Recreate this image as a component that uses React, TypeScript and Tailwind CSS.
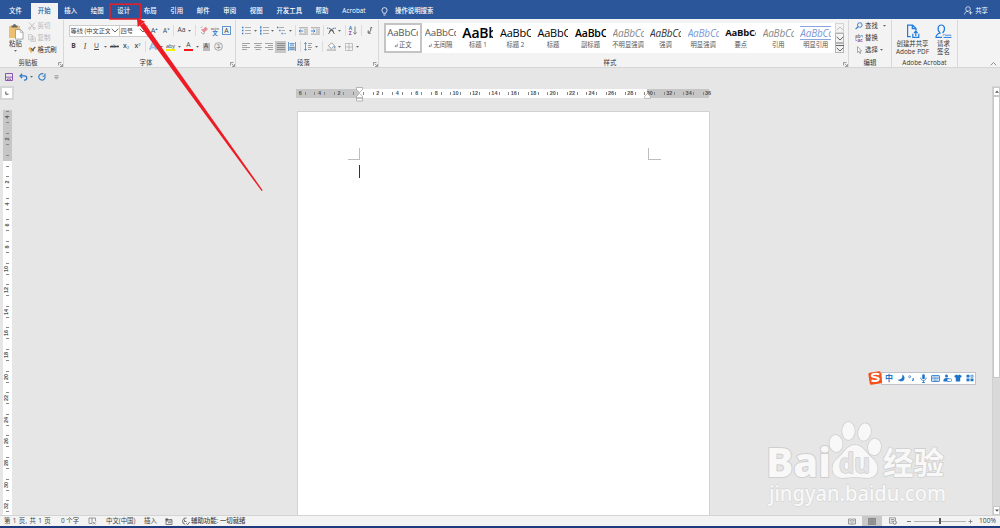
import type { ReactNode } from 'react'
import clsx from 'clsx'

const blue = '#2f78c4'
const gray = '#666'

const tabs = [
  { label: '文件', width: 'w-[31px]' },
  { label: '开始', width: 'w-[26.5px]', active: true },
  { label: '插入', width: 'w-[26.5px]' },
  { label: '绘图', width: 'w-[26.5px]' },
  { label: '设计', width: 'w-[26.5px]' },
  { label: '布局', width: 'w-[26.5px]' },
  { label: '引用', width: 'w-[26.5px]' },
  { label: '邮件', width: 'w-[26.5px]' },
  { label: '审阅', width: 'w-[26.5px]' },
  { label: '视图', width: 'w-[26.5px]' },
  { label: '开发工具', width: 'w-[39.5px]' },
  { label: '帮助', width: 'w-[26px]' },
  { label: 'Acrobat', width: 'w-[38px]' },
]

const styles = [
  { label: '正文', sample: 'AaBbCc', look: 'text-[9.7px] text-[#555]', mark: true, active: true },
  { label: '无间隔', sample: 'AaBbCc', look: 'text-[9.7px] text-[#555]', mark: true },
  { label: '标题 1', sample: 'AaBb', look: 'text-[14px] font-semibold text-black' },
  { label: '标题 2', sample: 'AaBbC', look: 'text-[11px] text-black' },
  { label: '标题', sample: 'AaBbC', look: 'text-[11px] text-black' },
  { label: '副标题', sample: 'AaBbC', look: 'text-[10.5px] font-semibold text-black' },
  { label: '不明显强调', sample: 'AaBbCc', look: 'text-[10px] italic text-[#888]' },
  { label: '强调', sample: 'AaBbCc', look: 'text-[10px] italic text-[#333]' },
  { label: '明显强调', sample: 'AaBbCc', look: 'text-[10px] italic text-[#7c99da]' },
  { label: '要点', sample: 'AaBbCc', look: 'text-[9.5px] font-bold text-[#111]' },
  { label: '引用', sample: 'AaBbCc', look: 'text-[10px] italic text-[#888]' },
  { label: '明显引用', sample: 'AaBbCc', look: 'text-[10px] italic text-[#7c99da] border-y border-[#8aa5dd]' },
]

const hNumbers = Array.from({ length: 22 }, (_, i) => (i - 3) * 2)
const vNumbers = Array.from({ length: 19 }, (_, i) => (i - 2) * 2)

function Icon({ w, h, children, className }: { w: number; h: number; children: ReactNode; className?: string }) {
  return (
    <svg width={w} height={h} viewBox={`0 0 ${w} ${h}`} fill="none" className={clsx('shrink-0', className)}>
      {children}
    </svg>
  )
}

function Cell({ className, children }: { className: string; children?: ReactNode }) {
  return <span className={clsx('flex h-full shrink-0 items-center justify-center whitespace-nowrap', className)}>{children}</span>
}

function Caret({ className }: { className: string }) {
  return (
    <Cell className={className}>
      <Icon w={3} h={2}>
        <path d="M0 0h3L1.5 1.8z" fill="#666" />
      </Icon>
    </Cell>
  )
}

function Sep({ className }: { className: string }) {
  return (
    <Cell className={className}>
      <span className="h-[11px] w-px bg-[#dcdcdc]" />
    </Cell>
  )
}

function Chevron({ up, color = '#555' }: { up?: boolean; color?: string }) {
  return (
    <Icon w={8} h={5}>
      <path d={up ? 'M.7 4.2 4 1l3.3 3.2' : 'M.7.8 4 4 7.3.8'} stroke={color} strokeWidth=".9" />
    </Icon>
  )
}

function Group({ label, width, launcher, children }: { label: string; width: string; launcher?: boolean; children: ReactNode }) {
  return (
    <section className={clsx('flex h-[48px] shrink-0 flex-col', width)}>
      <div className="flex min-h-0 flex-1 border-r border-[#d8d8d8]">{children}</div>
      <div className="flex h-[10px] items-center border-r border-[#d8d8d8]">
        <span className="flex-1 text-center text-[6.4px] leading-[10px] text-[#333]">{label}</span>
        {launcher && (
          <span className="flex w-[7px] justify-end pt-[2px] pr-[0.5px]">
            <Icon w={5} h={5}>
              <path d="M.5 3.5v-3h3M1.8 1.8l2.4 2.4M4.5 2v2.5H2" stroke="#777" strokeWidth=".7" />
            </Icon>
          </span>
        )}
      </div>
    </section>
  )
}

function AlignIcon({ widths, offset, color = '#999' }: { widths: number[]; offset: number; color?: string }) {
  return (
    <Icon w={8} h={7}>
      {widths.map((w, i) => (
        <path key={i} d={`M${(8 - w) * offset} ${i * 2 + 0.5}h${w}`} stroke={color} strokeWidth=".9" />
      ))}
    </Icon>
  )
}

function ListIcon({ dots }: { dots: string }) {
  return (
    <Icon w={9} h={9}>
      <path d={dots} stroke={blue} strokeWidth="1.3" />
      <path d="M3 1.5h6M3 4.5h6M3 7.5h6" stroke="#999" strokeWidth=".8" />
    </Icon>
  )
}

function IndentIcon({ flip }: { flip?: boolean }) {
  return (
    <Icon w={9} h={8}>
      <path d="M0 .8h9M5 2.9h4M5 5h4M0 7.1h9" stroke="#8a8a8a" strokeWidth=".8" />
      <path d={flip ? 'M0 4h4M2.5 2.5 4 4 2.5 5.5' : 'M4.2 4h-4M1.7 2.5.2 4l1.5 1.5'} stroke={blue} strokeWidth=".9" />
    </Icon>
  )
}

function TitleBar() {
  return (
    <header className="flex h-[19px] shrink-0 items-end bg-[#2b579a] text-[6.4px] text-white">
      {tabs.map((tab) => (
        <div
          key={tab.label}
          className={clsx(
            'flex h-[16px] shrink-0 items-center justify-center pb-[1px] font-medium',
            tab.width,
            tab.active && 'bg-[#f3f3f3] text-[#2b579a]',
          )}
        >
          {tab.label}
        </div>
      ))}
      <div className="flex h-[16px] w-[22px] items-center justify-center">
        <Icon w={7} h={9}>
          <path d="M2.3 6.3C2 5.2.9 4.7.9 3.2a2.6 2.6 0 0 1 5.2 0c0 1.5-1.1 2-1.4 3.1zM2.4 8h2.2" stroke="#fff" strokeWidth=".8" />
        </Icon>
      </div>
      <div className="flex h-[16px] flex-1 items-center pb-[1px] font-medium">操作说明搜索</div>
      <div className="flex h-[16px] items-center gap-[2px] pr-[12px] pb-[1px]">
        <Icon w={9} h={9}>
          <circle cx="4" cy="3" r="2.3" stroke="#fff" strokeWidth=".7" />
          <path d="M.6 8.5c0-2 1.4-3.2 3.4-3.2M6.6 5v3.6M4.8 6.8h3.6" stroke="#fff" strokeWidth=".7" />
        </Icon>
        共享
      </div>
    </header>
  )
}

function ClipboardGroup() {
  return (
    <Group label="剪贴板" width="w-[64px]" launcher>
      <div className="flex w-[28px] flex-col items-center pt-[3px] pl-[3px]">
        <Icon w={16} h={17}>
          <path d="M1 3h11v12H1z" fill="#ecc071" />
          <path d="M3.5 2.5H5a1.5 1.5 0 0 1 3 0h1.5v2h-6z" fill="#666" />
          <path d="M7.5 6.5h5L15 9.1v7H7.5z" fill="#fff" stroke="#888" strokeWidth=".7" />
          <path d="M12.3 6.5v2.8H15" stroke="#888" strokeWidth=".6" />
        </Icon>
        <span className="-mt-[1px] text-[6.4px] leading-[9px] text-[#333]">粘贴</span>
        <Caret className="h-[6px]!" />
      </div>
      <div className="flex flex-col text-[6.4px] text-[#b4b4b4]">
        <div className="flex h-[12px] items-center gap-[1.5px]">
          <Icon w={8} h={8}>
            <path d="M1.2.8l4.4 4.9M6.6.8 2.3 5.7" stroke="#b5b5b5" strokeWidth=".8" />
            <circle cx="1.7" cy="6.4" r="1.1" stroke="#b5b5b5" strokeWidth=".7" />
            <circle cx="6.2" cy="6.4" r="1.1" stroke="#b5b5b5" strokeWidth=".7" />
          </Icon>
          剪切
        </div>
        <div className="flex h-[12px] items-center gap-[1.5px]">
          <Icon w={8} h={8}>
            <path d="M.5.5h2.8l1.4 1.3v4H.5z M3 2.4h3l1.4 1.4v3.8H3z" fill="#eee" stroke="#b8b8b8" strokeWidth=".6" />
            <path d="M4 4.8h2.4M4 6h2.4" stroke="#b8b8b8" strokeWidth=".5" />
          </Icon>
          复制
        </div>
        <div className="flex h-[12px] items-center gap-[1.5px] text-[#333]">
          <Icon w={8} h={8}>
            <path d="M.3 2.2 2.4 1l3 3.3-2.3 2.9z" fill="#e8b15c" />
            <path d="m3.2 2.4 2.5 2.8M5 3.5 7.3.8" stroke="#555" strokeWidth="1.2" />
          </Icon>
          格式刷
        </div>
      </div>
    </Group>
  )
}

function FontGroup() {
  return (
    <Group label="字体" width="w-[172px]" launcher>
      <div className="flex flex-col gap-[4px] pt-[4.5px] text-[6.8px] text-[#444]">
        <div className="flex h-[12px] pl-[4.5px]">
          <div className="flex w-[51px] items-center justify-between border border-[#ccc] bg-white pl-[1px] text-[6.2px]">
            <span className="w-[39px] overflow-hidden whitespace-nowrap">等线 (中文正文</span>
            <Chevron />
          </div>
          <div className="flex w-[28.5px] items-center justify-between border border-l-0 border-[#ccc] bg-white pl-[1px] text-[6.2px]">
            四号
            <Chevron />
          </div>
          <Cell className="w-[13px] text-[7.4px]">
            A
            <Icon w={3} h={6}>
              <path d="M.2 2h2.6L1.5.3z" fill={blue} />
            </Icon>
          </Cell>
          <Cell className="w-[11px] text-[6.4px]">
            A
            <Icon w={3} h={6}>
              <path d="M.2.5h2.6L1.5 2.2z" fill={blue} />
            </Icon>
          </Cell>
          <Sep className="w-[3px]" />
          <Cell className="w-[13px]">Aa</Cell>
          <Caret className="w-[3px]" />
          <Sep className="w-[9px]" />
          <Cell className="w-[8px]">
            <Icon w={9} h={9}>
              <path d="m1 3.3 3 3.4 4-3.6L5.5.8 3.4 3z" fill="#e78a98" />
              <path d="m1.2 6.2 1.8 2 2-1.6M.8 2l1.6-1.6" stroke="#888" strokeWidth=".7" />
            </Icon>
          </Cell>
          <Cell className="w-[14px] flex-col">
            <span className="text-[4.3px] leading-[4px]">wén</span>
            <span className="text-[5.5px] leading-[6px] font-bold text-[#2f78c4]">文</span>
          </Cell>
          <Cell className="w-[9px]">
            <span className="flex h-[9px] w-[9px] shrink-0 items-center justify-center border border-[#5f97cf] text-[7px] leading-none">A</span>
          </Cell>
        </div>
        <div className="flex h-[12px] pl-[4px]">
          <Cell className="w-[11px] font-bold">B</Cell>
          <Cell className="w-[12px] font-['Liberation_Serif'] text-[7.5px] italic">I</Cell>
          <Cell className="w-[11px] underline">U</Cell>
          <Caret className="w-[7px]" />
          <Cell className="w-[11px] text-[5.4px] line-through">abc</Cell>
          <Cell className="w-[12px] font-semibold">
            x<sub className="text-[4px] text-[#2f78c4]">2</sub>
          </Cell>
          <Cell className="w-[11px] font-semibold">
            x<sup className="text-[4px] text-[#2f78c4]">2</sup>
          </Cell>
          <Sep className="w-[5px]" />
          <Cell className="w-[10px]">
            <Icon w={8} h={9}>
              <path d="M.8 7.8 3.6 1h.9l2.8 6.8M2 5.4h4" stroke="#5d9bd6" strokeWidth="1.5" />
              <path d="M.8 7.8 3.6 1h.9l2.8 6.8M2 5.4h4" stroke="#f3f3f3" strokeWidth=".5" />
            </Icon>
          </Cell>
          <Caret className="w-[6px]" />
          <Cell className="w-[13px] flex-col">
            <span className="text-[5.5px] leading-[6px]">aby</span>
            <span className="h-[2px] w-[9px] bg-[#f7f000]" />
          </Cell>
          <Caret className="w-[5px]" />
          <Cell className="w-[13px] flex-col">
            <span className="text-[6.8px] leading-[6.5px]">A</span>
            <span className="h-[2px] w-[9px] bg-[#f01818]" />
          </Cell>
          <Caret className="w-[4px]" />
          <Cell className="w-[14px]">
            <span className="flex h-[8px] w-[7px] items-center justify-center bg-[#bbb] text-[6.5px] leading-none">A</span>
          </Cell>
          <Cell className="w-[10px]">
            <Icon w={9} h={9}>
              <circle cx="4.5" cy="4.5" r="3.9" stroke="#777" strokeWidth=".6" />
              <text x="4.5" y="6.3" textAnchor="middle" fontSize="5" fill="#666">字</text>
            </Icon>
          </Cell>
        </div>
      </div>
    </Group>
  )
}

function ParagraphGroup() {
  return (
    <Group label="段落" width="w-[143px]" launcher>
      <div className="flex flex-col gap-[4px] pt-[4.5px] pl-[4px]">
        <div className="flex h-[12px]">
          <Cell className="w-[12px]">
            <ListIcon dots="M0 1.5h1.4M0 4.5h1.4M0 7.5h1.4" />
          </Cell>
          <Caret className="w-[6px]" />
          <Cell className="w-[12px]">
            <ListIcon dots="M.8.3v2.2M.8 3.5v2.2M.8 6.6v2.2" />
          </Cell>
          <Caret className="w-[4px]" />
          <Cell className="w-[14px]">
            <Icon w={9} h={9}>
              <path d="M0 1.5h1.4M2.2 4.5h1.3M4.5 7.5h1.2" stroke={blue} strokeWidth="1.3" />
              <path d="M2.3 1.5H7M4.5 4.5H8M6.6 7.5H9" stroke="#999" strokeWidth=".8" />
            </Icon>
          </Cell>
          <Caret className="w-[4px]" />
          <Sep className="w-[6px]" />
          <Cell className="w-[11px]">
            <IndentIcon />
          </Cell>
          <Cell className="w-[12px]">
            <IndentIcon flip />
          </Cell>
          <Sep className="w-[5px]" />
          <Cell className="w-[11px]">
            <Icon w={9} h={8}>
              <path d="m1.5 7 3-4.5 3 4.5M2 1l5 3.5M7 1 2 4.5" stroke="#555" strokeWidth=".9" />
              <path d="M0 1.2h1.4M7.6 1.2H9" stroke={blue} />
            </Icon>
          </Cell>
          <Caret className="w-[4px]" />
          <Sep className="w-[8px]" />
          <Cell className="w-[8px] gap-[1px]">
            <span className="flex flex-col text-[4.8px] leading-[4.5px] font-bold">
              <span className="text-[#2f78c4]">A</span>
              <span className="text-[#8e4ba8]">Z</span>
            </span>
            <Icon w={4} h={9}>
              <path d="M2 .5v7.6M.4 6.4 2 8.2l1.6-1.8" stroke={gray} strokeWidth=".8" />
            </Icon>
          </Cell>
          <Sep className="w-[9px]" />
          <Cell className="w-[7px]">
            <Icon w={6} h={7}>
              <path d="M5.2.6H3.8v2.6M3.8 3.2 2 5.8M1.2 3.4v2.8h2.6" stroke="#555" strokeWidth=".9" />
            </Icon>
          </Cell>
        </div>
        <div className="flex h-[12px]">
          <Cell className="w-[12px]">
            <AlignIcon widths={[8, 5, 8, 5]} offset={0} />
          </Cell>
          <Cell className="w-[11px]">
            <AlignIcon widths={[8, 5, 8, 5]} offset={0.5} />
          </Cell>
          <Cell className="w-[12px]">
            <AlignIcon widths={[8, 5, 8, 5]} offset={1} />
          </Cell>
          <Cell className="w-[11px] bg-[#c6c6c6]">
            <AlignIcon widths={[8, 8, 8, 8]} offset={0} color="#888" />
          </Cell>
          <Cell className="w-[12px]">
            <Icon w={8} h={9}>
              <path d="M.4 0v9M7.6 0v9" stroke={blue} strokeWidth=".8" />
              <path d="M1.5 1.6h5M2 3.2h4" stroke={blue} strokeWidth=".8" />
              <path d="M1.2 4.6h5.6v3.8H1.2z" fill="#9cc3e6" />
              <path d="M1.5 5.5h5M1.5 7.3h5" stroke="#777" strokeWidth=".7" />
            </Icon>
          </Cell>
          <Sep className="w-[4px]" />
          <Cell className="w-[12px]">
            <Icon w={8} h={9}>
              <path d="M1.5.6v7.8M.2 2 1.5.6 2.8 2M.2 7l1.3 1.4L2.8 7" stroke={blue} strokeWidth=".7" />
              <path d="M4 1.5h4M4 3.5h3M4 5.5h4M4 7.5h3" stroke="#8a8a8a" strokeWidth=".8" />
            </Icon>
          </Cell>
          <Caret className="w-[4px]" />
          <Sep className="w-[9px]" />
          <Cell className="w-[9px]">
            <Icon w={9} h={9}>
              <path d="M1.4 4 4.6.8l2.8 2.8L4.3 6.4z" fill="#fff" stroke="#777" strokeWidth=".7" />
              <path d="M7.8 4.3v2" stroke={blue} />
              <path d="M.4 7.3h8.2v1.3H.4z" fill="#fff" stroke="#888" strokeWidth=".5" />
            </Icon>
          </Cell>
          <Caret className="w-[6px]" />
          <Cell className="w-[13px]">
            <Icon w={8} h={8}>
              <path d="M.5.5h7v7h-7zM4 .5v7M.5 4h7" stroke="#aaa" strokeWidth=".7" />
            </Icon>
          </Cell>
          <Caret className="w-[4px]" />
        </div>
      </div>
    </Group>
  )
}

function StylesGroup() {
  return (
    <Group label="样式" width="w-[470px]" launcher>
      <div className="flex h-[31px] pt-[3px] pl-[5px]">
        <div className="flex h-[30px] w-[451px] bg-white">
          {styles.map((style) => (
            <div
              key={style.label}
              className={clsx(
                'flex h-[30px] w-[37.55px] shrink-0 flex-col items-center border-2',
                style.active ? 'border-[#c4c4c4]' : 'border-transparent',
              )}
            >
              <div className="flex h-[15px] w-[31px] items-center overflow-hidden">
                <span className={clsx("w-[31px] overflow-hidden font-['Open_Sans'] leading-[12px] tracking-[-0.2px] whitespace-nowrap", style.look)}>
                  {style.sample}
                </span>
              </div>
              <span className="flex h-[10px] items-center text-[6.3px] leading-[10px] whitespace-nowrap text-[#555]">
                {style.mark && (
                  <Icon w={5} h={5}>
                    <path d="M3.3.8v2.4H1M2 2.2 1 3.2l1 1" stroke="#555" strokeWidth=".6" />
                  </Icon>
                )}
                {style.label}
              </span>
            </div>
          ))}
        </div>
        <div className="flex h-[31px] w-[9px] flex-col">
          <div className="flex h-[10px] items-center justify-center border border-[#d5d5d5]">
            <Chevron up color="#b5b5b5" />
          </div>
          <div className="flex h-[10px] items-center justify-center border border-[#b5b5b5]">
            <Chevron />
          </div>
          <div className="flex h-[10px] flex-col items-center justify-center gap-[1px] border border-[#b5b5b5]">
            <span className="h-px w-[8px] shrink-0 bg-[#666]" />
            <Chevron />
          </div>
        </div>
      </div>
    </Group>
  )
}

function EditGroup() {
  return (
    <Group label="编辑" width="w-[43px]">
      <div className="flex flex-col pl-[6px] text-[6.4px] text-[#333]">
        <div className="flex h-[12px] items-center gap-[2px]">
          <Icon w={8} h={8}>
            <circle cx="4.8" cy="3" r="2.3" stroke={blue} strokeWidth=".9" />
            <path d="M3.1 4.7.6 7.2" stroke={blue} strokeWidth="1.2" />
          </Icon>
          查找
          <Caret className="w-[9px]" />
        </div>
        <div className="flex h-[12px] items-center gap-[2px]">
          <Icon w={8} h={8}>
            <text x="0" y="3.8" fontSize="4.6" fontWeight="700" fill="#777">ab</text>
            <text x="2.6" y="7.6" fontSize="4.6" fontWeight="700" fill="#8e4ba8">ac</text>
            <path d="M.8 4.5v2h1.5M5.8 1.5h1.5v2" stroke={blue} strokeWidth=".6" />
          </Icon>
          替换
        </div>
        <div className="flex h-[12px] items-center gap-[2px]">
          <Icon w={8} h={8}>
            <path d="M2.5.6v6l1.4-1.3 1 2.3.9-.4-1-2.2h1.8z" fill="#fff" stroke="#777" strokeWidth=".6" />
          </Icon>
          选择
          <Caret className="w-[3px]" />
        </div>
      </div>
    </Group>
  )
}

function AcrobatGroup() {
  return (
    <Group label="Adobe Acrobat" width="w-[66px]">
      <div className="flex flex-1 justify-center gap-[4px] pt-[3.5px] text-center text-[6.4px] leading-[8px] text-[#333]">
        <div className="flex w-[34px] flex-col items-center gap-[1px] whitespace-nowrap">
          <Icon w={14} h={15}>
            <path
              d="M4.8 12.6H1.6V1.2h5l3.4 3.3v2M6.3 1.2v3.5H10M6.8 9.8v3.6h6V9.8M9.8 12V7.4M8 9l1.8-1.8L11.6 9"
              stroke="#1e7be0"
              strokeWidth="1.2"
            />
          </Icon>
          <span>
            创建并共享
            <br />
            <span className="tracking-[0.05px]">Adobe PDF</span>
          </span>
        </div>
        <div className="flex w-[20px] flex-col items-center gap-[1px] whitespace-nowrap">
          <Icon w={17} h={15}>
            <path
              d="M7 13.4H1c0-2.6 1.6-3.6 4-4.4C3.3 7.3 2.8 5.3 3.2 3.5 3.6 1.9 4.8 1 6.3 1s2.700.9 3.1 2.5c.4 1.8-.1 3.8-1.8 5.5"
              stroke="#1e7be0"
              strokeWidth="1.2"
            />
            <path d="M8 11.5 9.5 10M8.500 13.4h8M10 11.5c1-1.5 1.5.8 2.5-.3s1 .8 1.8.1 1 .3 2 .1" stroke="#1e7be0" strokeWidth="1" />
          </Icon>
          <span>
            请求
            <br />
            签名
          </span>
        </div>
      </div>
    </Group>
  )
}

function Ribbon() {
  return (
    <div className="flex h-[49px] shrink-0 border-b border-[#d6d6d6] bg-[#f3f3f3] pt-px">
      <ClipboardGroup />
      <FontGroup />
      <ParagraphGroup />
      <StylesGroup />
      <EditGroup />
      <AcrobatGroup />
      <div className="flex flex-1 items-end justify-end pr-[3px] pb-[1px]">
        <Icon w={7} h={5}>
          <path d="M.8 4.2 3.5 1.5l2.700 2.7" stroke="#777" strokeWidth=".8" />
        </Icon>
      </div>
    </div>
  )
}

function QuickAccess() {
  return (
    <div className="flex h-[18px] shrink-0 items-center pl-[3px]">
      <Cell className="w-[11px]">
        <Icon w={8} h={8}>
          <path d="M.5.5h7v7h-7z" stroke="#8a55b0" />
          <path d="M1 4.2h6M2.5 7.5V6h3v1.5" stroke="#8a55b0" strokeWidth=".9" />
        </Icon>
      </Cell>
      <Cell className="w-[19px]">
        <Icon w={9} h={8}>
          <path d="M3.2.8 1 2.9l2.2 2.2M1 2.9h4.6a2.1 2.1 0 0 1 0 4.3H5" stroke={blue} strokeWidth="1.2" />
        </Icon>
      </Cell>
      <Caret className="-ml-[4px] w-[4px]" />
      <Cell className="w-[17px]">
        <Icon w={8} h={8}>
          <path d="M5.4 1A3.2 3.2 0 1 0 7.2 4M4.6 3.2H7V.5" stroke={blue} strokeWidth="1.1" />
        </Icon>
      </Cell>
      <Cell className="w-[13px]">
        <Icon w={5} h={5}>
          <path d="M.5.7h4M.8 2.3h3.4L2.5 4.2z" stroke="#777" strokeWidth=".6" />
        </Icon>
      </Cell>
    </div>
  )
}

function HorizontalRuler() {
  return (
    <div className="relative mt-[2.5px] ml-[296px] h-[9px] w-[416px]">
      <div className="flex h-full">
        <div className="w-[63px] bg-[#c6c6c6]" />
        <div className="w-[288px] bg-white" />
        <div className="w-[62px] bg-[#c6c6c6]" />
      </div>
      <div className="absolute inset-0 flex overflow-hidden">
        <div className="-ml-[5.5px] flex items-center">
          {hNumbers.map((n) => (
            <div key={n} className="flex w-[19.43px] shrink-0 items-center justify-center">
              <span className="h-[3px] w-px shrink-0 bg-[#888]" />
              <span className="w-[8.8px] text-center font-['Liberation_Sans'] text-[5.5px] leading-[9px] font-bold text-[#555]">
                {n === 0 ? '' : Math.abs(n)}
              </span>
              <span className="h-[3px] w-px shrink-0 bg-[#888]" />
            </div>
          ))}
        </div>
      </div>
      <Icon w={7} h={15} className="absolute -top-[2px] left-[59.5px]">
        <path d="M.5.5h6v2.2L3.5 5.5.5 2.700zM3.5 6.5l3 2.8V11h-6V9.300zM.5 11h6v3h-6z" fill="#fff" stroke="#999" strokeWidth=".7" />
      </Icon>
      <Icon w={7} h={6} className="absolute top-[4px] left-[347.5px]">
        <path d="m3.5.6 2.8 2.6v2.2H.7V3.2z" fill="#fff" stroke="#999" strokeWidth=".6" />
      </Icon>
    </div>
  )
}

function VerticalRuler() {
  return (
    <div className="relative mt-[10px] ml-[3px] flex min-h-0 w-[8.5px] flex-1 flex-col overflow-hidden">
      <div className="h-[51px] shrink-0 bg-[#c6c6c6]" />
      <div className="flex-1 bg-white" />
      <div className="absolute inset-x-0 -top-[3.5px] flex flex-col">
        {vNumbers.map((n) => (
          <div key={n} className="flex h-[21.62px] shrink-0 flex-col items-center justify-center">
            <span className="h-px w-[3px] shrink-0 bg-[#888]" />
            <span className="flex h-[10px] shrink-0 -rotate-90 items-center font-['Liberation_Sans'] text-[5.5px] leading-none font-bold text-[#555]">
              {n === 0 ? '' : Math.abs(n)}
            </span>
            <span className="h-px w-[3px] shrink-0 bg-[#888]" />
          </div>
        ))}
      </div>
    </div>
  )
}

function DocumentPage() {
  return (
    <div className="mt-[10.5px] ml-[284px] flex w-[413px] flex-1 justify-between border border-b-0 border-[#d2d2d2] bg-white pt-[36.5px] pr-[48px] pl-[49px]">
      <div className="flex w-[13px] flex-col items-end">
        <div className="h-[12px] w-[12px] border-r border-b border-[#bdbdbd]" />
        <div className="mt-[5px] h-[13px] w-px bg-[#333]" />
      </div>
      <div className="h-[12px] w-[13px] border-b border-l border-[#bdbdbd]" />
    </div>
  )
}

function Scrollbar() {
  return (
    <div className="flex w-[8px] flex-col border-l border-[#d0d0d0] bg-[#d9d9d9] pt-px">
      <div className="flex h-[9px] items-center justify-center border border-[#c8c8c8] bg-white">
        <Icon w={4} h={3}>
          <path d="M0 2.7h4L2 .4z" fill="#555" />
        </Icon>
      </div>
      <div className="h-[282px] border border-[#c8c8c8] bg-white" />
      <div className="flex-1" />
      <div className="flex h-[9px] items-center justify-center border border-[#c8c8c8] bg-white">
        <Icon w={4} h={3}>
          <path d="M0 .4h4L2 2.7z" fill="#555" />
        </Icon>
      </div>
    </div>
  )
}

function Workspace() {
  return (
    <main className="flex min-h-0 flex-1">
      <div className="flex flex-1 flex-col">
        <div className="flex h-[14px] shrink-0">
          <div className="flex h-[14px] w-[14px] shrink-0 items-center justify-center border-2 border-[#d6d6d6] bg-white">
            <Icon w={4} h={4}>
              <path d="M.8.5v2.7h2.7" stroke="#555" />
            </Icon>
          </div>
          <div className="-ml-[14px]">
            <HorizontalRuler />
          </div>
        </div>
        <div className="flex min-h-0 flex-1">
          <div className="flex w-[13px] flex-col">
            <VerticalRuler />
          </div>
          <div className="flex flex-1 flex-col">
            <DocumentPage />
          </div>
        </div>
      </div>
      <Scrollbar />
    </main>
  )
}

function StatusBar() {
  return (
    <footer className="flex h-[13px] shrink-0 items-center border-t border-b-2 border-t-[#d4d4d4] border-b-[#1c3a7c] bg-[#f3f3f3] pl-[4px] text-[6.4px] whitespace-nowrap text-[#444]">
      <span className="w-[57px] tracking-[0.35px]">第 1 页, 共 1 页</span>
      <span className="w-[27px]">0 个字</span>
      <Icon w={9} h={8}>
        <path d="M1 1h3v5.5H1zM4 1h3.5v3M5 7.5l3-3M5 5l2.5 2.5" stroke="#777" strokeWidth=".7" />
      </Icon>
      <span className="ml-[9px] w-[38px]">中文(中国)</span>
      <span className="w-[21px]">插入</span>
      <Icon w={8} h={7}>
        <path d="M1 1.5h6v5H1zM1 3h6M3 4.7h3" stroke="#666" strokeWidth=".8" />
        <circle cx="1.7" cy="1.5" r="1.2" fill="#555" />
      </Icon>
      <Icon w={9} h={9} className="ml-[8px]">
        <path d="M5.5 1A3.2 3.2 0 1 0 4.200 7.4M3.5 2.500v2h2M5.300 6.2l1.300 1.500L8.600 5" stroke="#555" strokeWidth=".8" />
      </Icon>
      <span className="flex-1 pl-px font-medium">辅助功能: 一切就绪</span>
      <Cell className="w-[21px]">
        <Icon w={8} h={7}>
          <path d="M.5 1h3l.5.5.5-.5h3v5h-3l-.5.5-.5-.5h-3zM4 1.5v5M1.5 2.5h1.3M1.500 4h1.3M5.200 2.500h1.3M5.200 4h1.3" stroke="#777" strokeWidth=".7" />
        </Icon>
      </Cell>
      <Cell className="w-[20px] bg-[#c8c8c8]">
        <Icon w={8} h={7}>
          <path d="M.5.5h7v6h-7z" fill="#999" stroke="#888" />
          <path d="M2 2h4M2 3.5h4M2 5h4" stroke="#808080" strokeWidth=".6" />
        </Icon>
      </Cell>
      <Cell className="w-[22px]">
        <Icon w={8} h={8}>
          <path d="M.5.8h6v2.500M.5.8V6.200h3M1.700 2.500h3.600M1.700 4.200H4" stroke="#777" strokeWidth=".7" />
          <circle cx="5.7" cy="5.5" r="1.7" stroke="#666" strokeWidth=".8" />
        </Icon>
      </Cell>
      <Cell className="w-[10px]">
        <span className="h-px w-[4px] bg-[#777]" />
      </Cell>
      <div className="flex w-[52px] items-center justify-center">
        <span className="h-px flex-1 bg-[#b0b0b0]" />
        <span className="h-[6px] w-[2.5px] bg-[#555]" />
        <span className="h-px flex-1 bg-[#b0b0b0]" />
      </div>
      <Cell className="w-[8px]">
        <Icon w={5} h={5}>
          <path d="M.5 2.5h4M2.500.5v4" stroke="#777" strokeWidth=".8" />
        </Icon>
      </Cell>
      <span className="w-[26px] pl-[5px] text-[6.7px]">100%</span>
    </footer>
  )
}

function ImeBar() {
  return (
    <div className="absolute top-[370px] left-[867px] flex h-[16px] items-center">
      <Icon w={17} h={16} className="relative z-10">
        <rect x="2" y="2" width="12.5" height="12" rx="1.5" fill="#f4511e" transform="rotate(-9 8 8)" />
        <path d="M12.3 4.4C9.5 3.5 5 3.7 4.8 5.7c-.2 2 7 1.2 6.9 3.3-.1 2.2-4.7 2.4-7.2 1.5" stroke="#fff" strokeWidth="2" />
      </Icon>
      <div className="-ml-[3px] flex h-[13px] w-[95px] items-center border border-[#c0c4c8] bg-white pl-px text-[#1f74c8]">
        <Cell className="w-[12px] text-[8px] leading-none font-bold">中</Cell>
        <Cell className="w-[11px]">
          <Icon w={8} h={8}>
            <path d="M5.2.5c1 3-1 5-4.5 5.3C3.5 8.5 7.6 7.3 7.5 3.8 7.4 2.3 6.500 1.200 5.200.5z" fill="#1f74c8" />
          </Icon>
        </Cell>
        <Cell className="w-[11px]">
          <Icon w={7} h={7}>
            <circle cx="1.7" cy="1.7" r="1" stroke="#1f74c8" strokeWidth=".7" />
            <path d="M5.2 3.2v1.5L4.5 6" stroke="#1f74c8" strokeWidth="1.3" />
          </Icon>
        </Cell>
        <Cell className="w-[12px]">
          <Icon w={7} h={9}>
            <rect x="2.2" y=".3" width="2.6" height="5" rx="1.3" fill="#1f74c8" />
            <path d="M.8 3.5c0 4 5.4 4 5.4 0M3.5 6.5v2M2 8.5h3" stroke="#1f74c8" strokeWidth=".8" />
          </Icon>
        </Cell>
        <Cell className="w-[12px]">
          <Icon w={9} h={7}>
            <rect x=".5" y=".5" width="8" height="6" rx=".6" fill="#cfe2f5" stroke="#1f74c8" strokeWidth=".8" />
            <path d="M1.5 2.2h6M1.5 3.6h6M2.8 5.2h3.4" stroke="#1f74c8" strokeWidth=".7" strokeDasharray="1 .4" />
          </Icon>
        </Cell>
        <Cell className="w-[12px]">
          <Icon w={9} h={8}>
            <circle cx="3.5" cy="1.9" r="1.5" fill="#1f74c8" />
            <path d="M.3 7.5C.3 5 1.500 4 3.500 4c1.500 0 2.300.5 2.800 1.300L5 7.500z" fill="#1f74c8" />
            <rect x="4" y="4.8" width="4.7" height="2.7" rx="1" fill="#fff" stroke="#1f74c8" strokeWidth=".7" />
          </Icon>
        </Cell>
        <Cell className="w-[10px]">
          <Icon w={8} h={8}>
            <path d="M2.5.5Q4 1.800 5.500.5L7.800 2l-.9 1.700-.7-.4v4.200H1.800V3.300l-.7.4L.2 2z" fill="#1f74c8" />
          </Icon>
        </Cell>
        <Cell className="w-[13px]">
          <Icon w={8} h={8}>
            <path d="M.5.8h3v2.800h-3zM.5 4.500h3v2.800h-3zM4.500 4.500h3v2.800h-3z" fill="#1f74c8" />
            <path d="M4.900 1.200h2.200v2H4.900z" stroke="#1f74c8" strokeWidth=".7" />
          </Icon>
        </Cell>
      </div>
    </div>
  )
}

function Watermark() {
  return (
    <svg
      className="pointer-events-none absolute top-[415px] left-[762px]"
      width="192"
      height="96"
      viewBox="0 0 192 96"
      fill="#f8f8f8"
      stroke="#cfcfcf"
      strokeWidth="1.6"
      strokeLinejoin="round"
      paintOrder="stroke"
    >
      <text x="4" y="62" fontFamily="Noto Sans" fontSize="41" fontWeight="800" textLength="65" lengthAdjust="spacingAndGlyphs" strokeWidth="2">
        Bai
      </text>
      <ellipse cx="74" cy="28.5" rx="6.5" ry="8.5" transform="rotate(-8 74 28.5)" />
      <ellipse cx="86.5" cy="16" rx="6.3" ry="9" />
      <ellipse cx="102.5" cy="17" rx="6.3" ry="8.8" transform="rotate(12 102.5 17)" />
      <ellipse cx="112.5" cy="32" rx="6.5" ry="8.3" transform="rotate(8 112.5 32)" />
      <path d="M93 30c6 0 9 4.5 12.5 8.5 4 4.500 10 8 10 15 0 6-4.500 9.500-10 9.500-4.500 0-8-1-12.500-1s-8 1-12.500 1c-5.500 0-10-3.500-10-9.500 0-7 6-10.500 10-15C84 34.500 87 30 93 30z" />
      <text
        x="77"
        y="58"
        fontFamily="Noto Sans"
        fontSize="26"
        fontWeight="700"
        fill="#e4e4e4"
        strokeWidth="1.4"
        textLength="31"
        lengthAdjust="spacingAndGlyphs"
      >
        du
      </text>
      <text x="121" y="59" fontFamily="Noto Sans CJK SC" fontSize="31" fontWeight="700" textLength="61" lengthAdjust="spacingAndGlyphs">
        经验
      </text>
      <text
        x="7"
        y="86"
        fontFamily="Noto Sans"
        fontSize="21.5"
        fontWeight="500"
        stroke="#d6d6d6"
        strokeWidth="1.3"
        textLength="177"
        lengthAdjust="spacingAndGlyphs"
      >
        jingyan.baidu.com
      </text>
    </svg>
  )
}

function Annotation() {
  return (
    <svg className="pointer-events-none absolute top-0 left-[100px]" width="170" height="200" viewBox="0 0 170 200">
      <rect x="10" y="4.2" width="30.6" height="14.8" fill="none" stroke="#ed1c24" strokeWidth="1.5" />
      <path d="M39.800 25.500 44 22.500 162.700 190.300 161.600 191z" fill="#ed1c24" />
      <path d="M37 18.500 45 21.500 37.700 27z" fill="#ed1c24" />
    </svg>
  )
}

export default function App() {
  return (
    <div className="relative flex h-[528px] w-[1000px] flex-col overflow-hidden bg-[#e6e6e6] font-['Open_Sans','Noto_Sans_CJK_SC',sans-serif]">
      <TitleBar />
      <Ribbon />
      <QuickAccess />
      <Workspace />
      <StatusBar />
      <ImeBar />
      <Watermark />
      <Annotation />
    </div>
  )
}
